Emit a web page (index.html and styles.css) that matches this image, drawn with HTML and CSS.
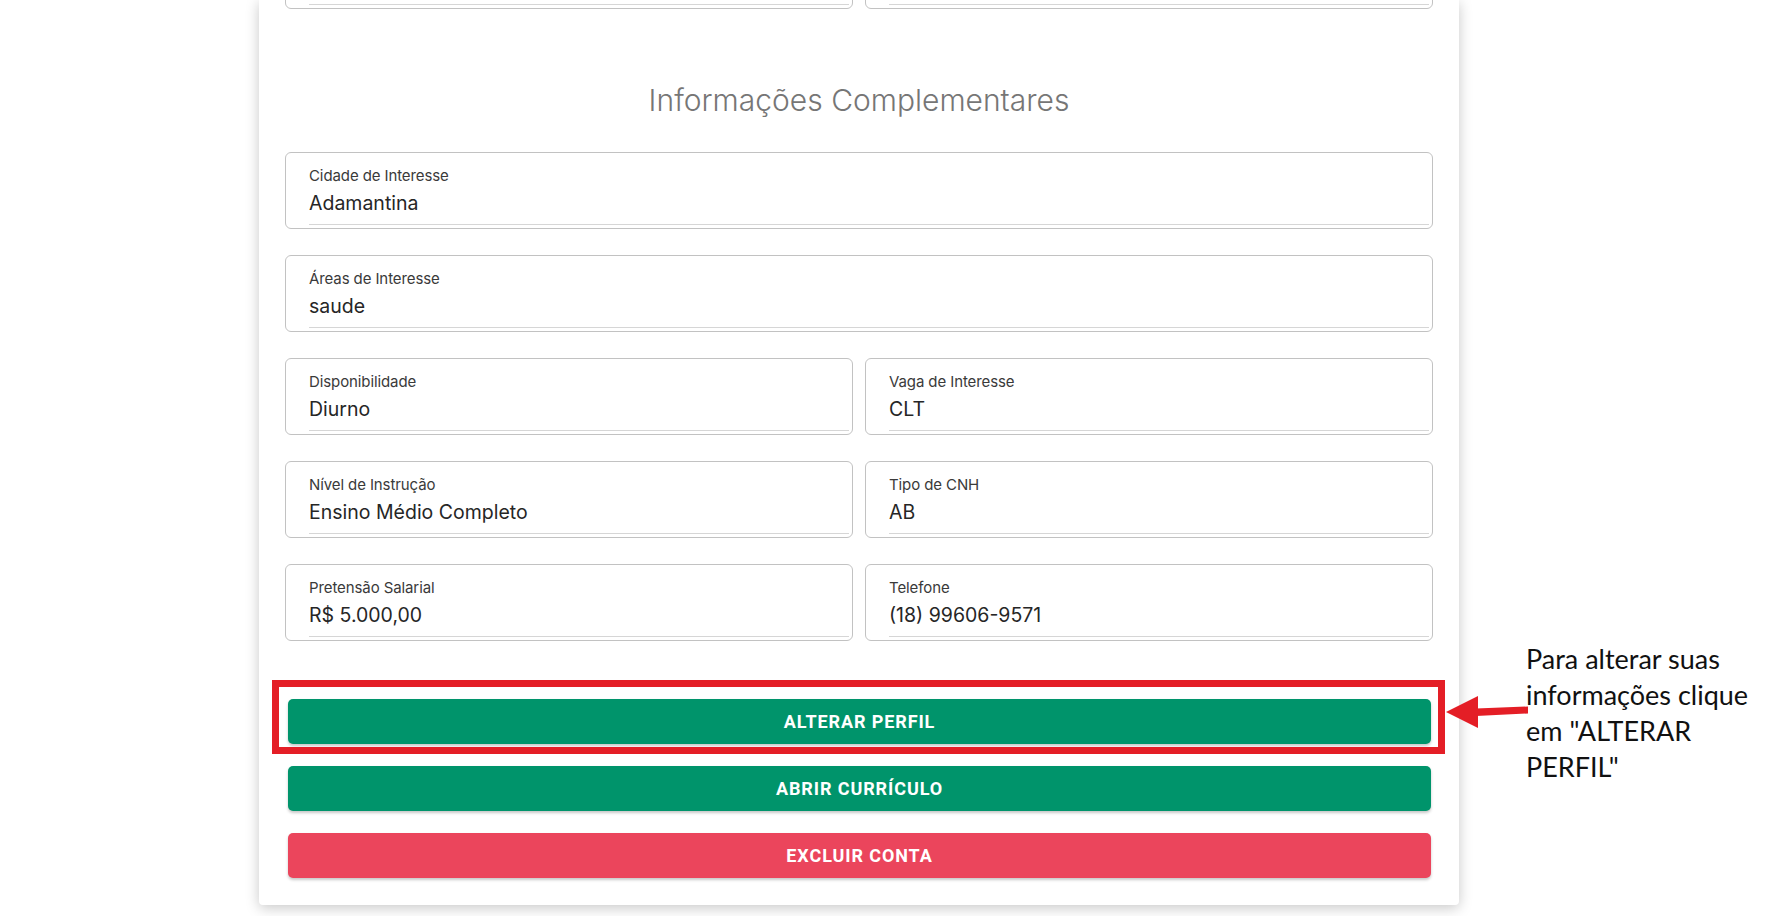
FILE: index.html
```html
<!DOCTYPE html>
<html lang="pt-BR">
<head>
<meta charset="utf-8">
<title>Perfil</title>
<link rel="stylesheet" href="styles.css">
</head>
<body>
<div class="page">
  <main class="card">
    <div class="row row-top">
      <div class="field"><div class="label">&nbsp;</div><div class="value">&nbsp;</div><div class="line"></div></div>
      <div class="field"><div class="label">&nbsp;</div><div class="value">&nbsp;</div><div class="line"></div></div>
    </div>

    <h2 class="title">Informações Complementares</h2>

    <div class="fields">
      <div class="row">
        <div class="field"><div class="label">Cidade de Interesse</div><div class="value">Adamantina</div><div class="line"></div></div>
      </div>
      <div class="row">
        <div class="field"><div class="label">Áreas de Interesse</div><div class="value">saude</div><div class="line"></div></div>
      </div>
      <div class="row">
        <div class="field"><div class="label">Disponibilidade</div><div class="value">Diurno</div><div class="line"></div></div>
        <div class="field"><div class="label">Vaga de Interesse</div><div class="value">CLT</div><div class="line"></div></div>
      </div>
      <div class="row">
        <div class="field"><div class="label">Nível de Instrução</div><div class="value">Ensino Médio Completo</div><div class="line"></div></div>
        <div class="field"><div class="label">Tipo de CNH</div><div class="value">AB</div><div class="line"></div></div>
      </div>
      <div class="row">
        <div class="field"><div class="label">Pretensão Salarial</div><div class="value">R$ 5.000,00</div><div class="line"></div></div>
        <div class="field"><div class="label">Telefone</div><div class="value">(18) 99606-9571</div><div class="line"></div></div>
      </div>
    </div>

    <div class="actions">
      <button class="btn btn-green">ALTERAR PERFIL</button>
      <button class="btn btn-green">ABRIR CURRÍCULO</button>
      <button class="btn btn-red">EXCLUIR CONTA</button>
    </div>
  </main>

  <div class="highlight-box"></div>
  <svg class="arrow" width="86" height="36" viewBox="0 0 86 36">
    <polygon points="2,17 34,1 34,33" fill="#e41e26"/>
    <polygon points="32,13.5 84,11.5 84,18.5 32,21" fill="#e41e26"/>
  </svg>
  <div class="note">Para alterar suas<br>informações clique<br>em "ALTERAR<br>PERFIL"</div>
</div>
</body>
</html>
```

FILE: styles.css
```css
html, body {
  margin: 0;
  padding: 0;
  background: #ffffff;
  height: 100%;
  overflow: hidden;
}

.page {
  position: relative;
  width: 1767px;
  height: 916px;
  display: flex;
  align-items: flex-start;
  font-family: "Inter", "Roboto", sans-serif;
}

.card {
  margin-left: 259px;
  width: 1200px;
  box-sizing: border-box;
  padding: 0 26px 27px;
  background: #fff;
  border-radius: 0 0 4px 4px;
  box-shadow: 0 3px 14px rgba(0, 0, 0, 0.22);
}

.row {
  display: flex;
  gap: 12px;
}

.row-top {
  margin-top: -68px;
}

.fields {
  display: flex;
  flex-direction: column;
  gap: 26px;
}

.field {
  flex: 1;
  box-sizing: border-box;
  height: 77px;
  border: 1px solid #c2c2c2;
  border-radius: 6px;
  padding: 14px 3px 0 23px;
  display: flex;
  flex-direction: column;
}

.label {
  font-size: 15px;
  line-height: 18px;
  color: #3a3a3a;
  letter-spacing: -0.1px;
}

.value {
  margin-top: 6px;
  font-size: 19.5px;
  line-height: 24px;
  color: #262626;
}

.line {
  margin-top: 9px;
  height: 1px;
  background: #d6d6d6;
}

.title {
  margin: 71px 0 32px;
  text-align: center;
  font-family: "Inter", sans-serif;
  font-weight: 300;
  font-size: 30px;
  line-height: 40px;
  color: #767676;
}

.actions {
  margin-top: 58px;
  padding: 0 2px 0 3px;
  display: flex;
  flex-direction: column;
  gap: 22px;
}

.btn {
  height: 45px;
  border: none;
  border-radius: 5px;
  color: #fff;
  font-family: "Roboto", sans-serif;
  font-weight: 700;
  font-size: 18px;
  letter-spacing: 0.9px;
  box-shadow: 0 2px 3px rgba(0, 0, 0, 0.22);
  cursor: pointer;
}

.btn-green {
  background: #00946b;
}

.btn-red {
  background: #eb455c;
}

.highlight-box {
  position: absolute;
  left: 272px;
  top: 680px;
  width: 1173px;
  height: 74px;
  box-sizing: border-box;
  border: 7px solid #e41e26;
}

.arrow {
  position: absolute;
  left: 1444px;
  top: 695px;
}

.note {
  position: absolute;
  left: 1526px;
  top: 641px;
  font-family: "Lato", "Open Sans", sans-serif;
  font-size: 27px;
  line-height: 36px;
  color: #111;
}
```
